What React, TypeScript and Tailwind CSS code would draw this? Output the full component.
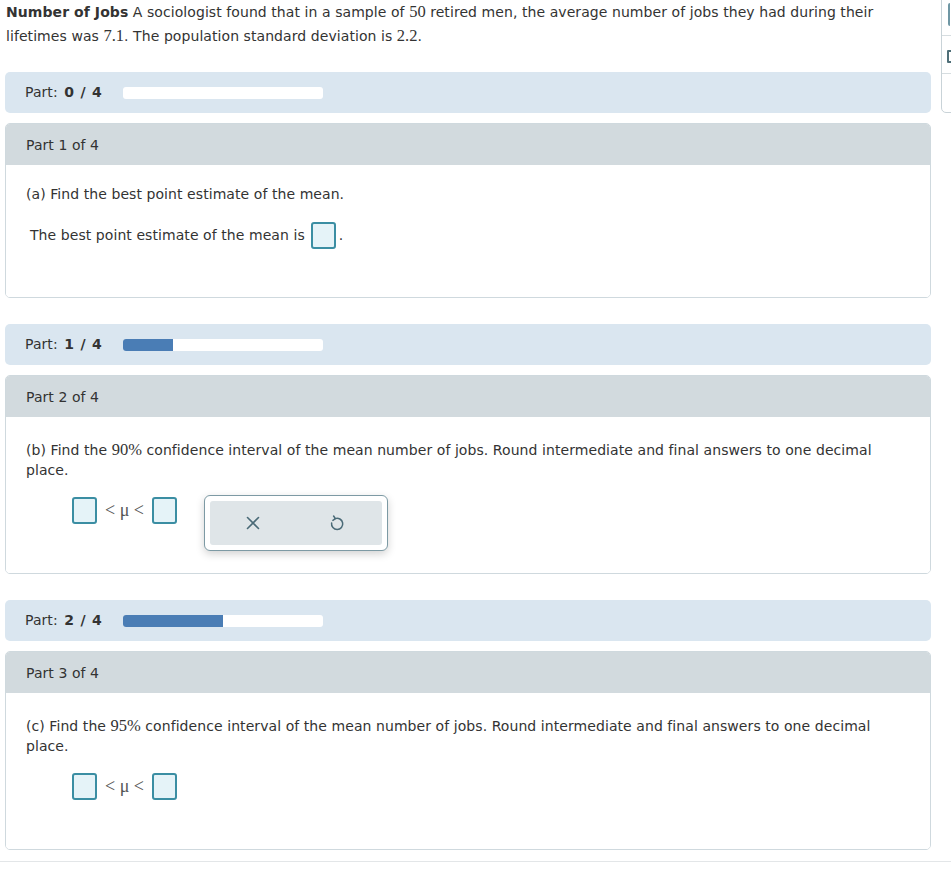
import React from "react";

const sans = "font-[family-name:DejaVu_Sans,Verdana,sans-serif]";
const serif = "font-[family-name:Liberation_Serif,Times_New_Roman,serif]";

function M({ children }: { children: React.ReactNode }) {
  return <span className={`${serif} text-[16.5px] tracking-normal`}>{children}</span>;
}

function Box() {
  return <span className="inline-block w-[25px] h-[27px] rounded-[3px] border-2 border-[#3b8ea3] bg-[#e5f3f8]" />;
}

function PartBar({ n }: { n: number }) {
  return (
    <div className="h-[41px] rounded-[5px] bg-[#dae6f0] flex items-center pl-[20px]">
      <span className="w-[98px] shrink-0">
        Part: <b className="font-bold tracking-[0.8px] ml-[2px]">{n} / 4</b>
      </span>
      <div className="w-[200px] h-[12px] rounded-[3px] bg-white overflow-hidden">
        <div className="h-full bg-[#4a7db5]" style={{ width: `${n * 25}%` }} />
      </div>
    </div>
  );
}

function Card({ title, children, bodyClass }: { title: string; children: React.ReactNode; bodyClass: string }) {
  return (
    <div className="rounded-[5px] border border-[#cfd9de] overflow-hidden">
      <div className="h-[41px] bg-[#d2dade] flex items-center pl-[20px] pt-[1px]">{title}</div>
      <div className={`bg-white ${bodyClass}`}>{children}</div>
    </div>
  );
}

function Interval() {
  return (
    <div className="flex items-center">
      <Box />
      <span className={`${serif} text-[18px] text-[#555] px-[8px] tracking-normal`}>&lt; μ &lt;</span>
      <Box />
    </div>
  );
}

export default function App() {
  return (
    <div className={`${sans} text-[14px] tracking-[0.07px] text-[#333] relative w-[951px] h-[870px] bg-white overflow-hidden`}>
      {/* right floating panel (cut off) */}
      <div className="absolute left-[941px] top-[-5px] w-[30px] h-[118px] border border-[#c9d3d8] rounded-bl-[5px] bg-white">
        <div className="absolute left-[6px] top-[7px] w-[20px] h-[23px] border-l-2 border-[#6f97a4] rounded-[2px]" />
        <div className="absolute left-0 right-0 top-[39px] h-px bg-[#d6dde0]" />
        <div className="absolute left-[5px] top-[54px] w-[20px] h-[13px] border-2 border-[#4f6f78] rounded-[1px]" />
        <div className="absolute left-0 right-0 top-[77px] h-px bg-[#d6dde0]" />
      </div>

      <div className="pl-[5px] w-[931px]">
        <p className="leading-[24px] pl-[1px]">
          <b className="font-bold">Number of Jobs</b> A sociologist found that in a sample of <M>50</M> retired men, the
          average number of jobs they had during their
          <br />
          lifetimes was <M>7.1</M>. The population standard deviation is <M>2.2</M>.
        </p>

        <div className="mt-[24px]">
          <PartBar n={0} />
        </div>
        <div className="mt-[10px]">
          <Card title="Part 1 of 4" bodyClass="pt-[19px] pb-[48px] pl-[20px]">
            <p className="leading-[20px]">(a) Find the best point estimate of the mean.</p>
            <div className="mt-[17px] pl-[4px] flex items-center h-[28px]">
              <span className="pt-[1px]">The best point estimate of the mean is</span>
              <span className="ml-[6px] flex">
                <Box />
              </span>
              <span className="ml-[3px]">.</span>
            </div>
          </Card>
        </div>

        <div className="mt-[26px]">
          <PartBar n={1} />
        </div>
        <div className="mt-[10px]">
          <Card title="Part 2 of 4" bodyClass="pt-[23px] pb-[22px] pl-[20px] pr-[40px]">
            <p className="leading-[20px]">
              (b) Find the <M>90%</M> confidence interval of the mean number of jobs. Round intermediate and final
              answers to one decimal place.
            </p>
            <div className="mt-[15px] pl-[46px] flex items-start">
              <div className="mt-[2px]">
                <Interval />
              </div>
              <div className="ml-[27px] w-[184px] h-[56px] rounded-[6px] border border-[#7d9aa4] bg-white p-[5px] shadow-[0_3px_8px_rgba(0,0,0,0.18)]">
                <div className="h-full rounded-[3px] bg-[#dfe5e8] flex items-center">
                  <svg width="16" height="16" viewBox="0 0 16 16" className="ml-[35px]">
                    <path d="M2.5 2.5 L13.5 13.5 M13.5 2.5 L2.5 13.5" stroke="#4a6a77" strokeWidth="1.6" strokeLinecap="round" />
                  </svg>
                  <svg width="18" height="18" viewBox="0 0 18 18" className="ml-[67px]">
                    <path d="M7.2 4.6 A5.6 5.6 0 1 1 3.6 9" fill="none" stroke="#4a6a77" strokeWidth="1.5" strokeLinecap="round" />
                    <path d="M5.6 2 L7.4 4.6 L4.9 6.4" fill="none" stroke="#4a6a77" strokeWidth="1.5" strokeLinecap="round" strokeLinejoin="round" />
                  </svg>
                </div>
              </div>
            </div>
          </Card>
        </div>

        <div className="mt-[26px]">
          <PartBar n={2} />
        </div>
        <div className="mt-[10px]">
          <Card title="Part 3 of 4" bodyClass="pt-[23px] pb-[49px] pl-[20px] pr-[40px]">
            <p className="leading-[20px]">
              (c) Find the <M>95%</M> confidence interval of the mean number of jobs. Round intermediate and final
              answers to one decimal place.
            </p>
            <div className="mt-[17px] pl-[46px]">
              <Interval />
            </div>
          </Card>
        </div>
      </div>
      <div className="mt-[11px] h-px bg-[#e3e6e8]" />
    </div>
  );
}
